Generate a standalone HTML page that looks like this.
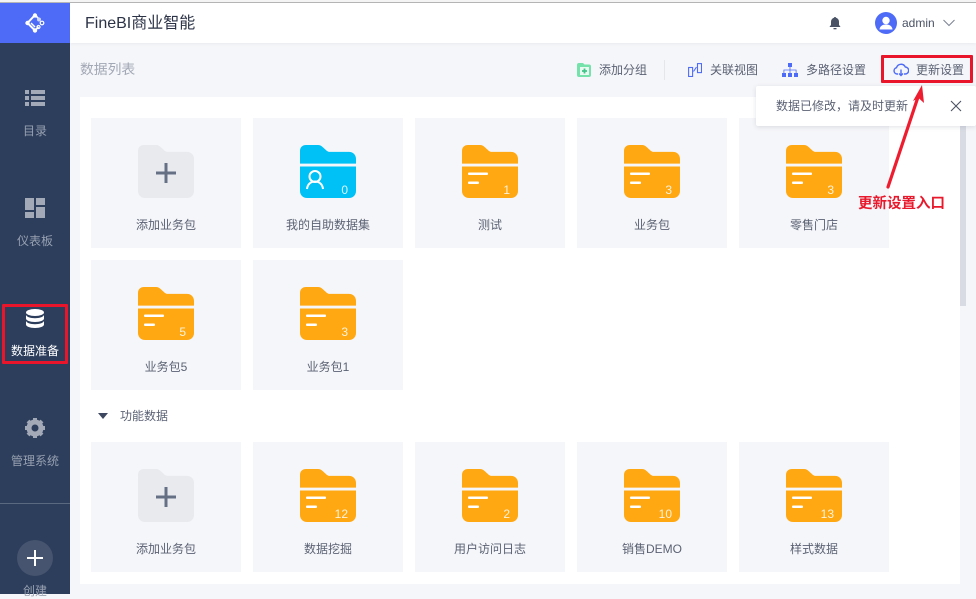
<!DOCTYPE html>
<html lang="zh"><head><meta charset="utf-8"><title>FineBI商业智能</title>
<style>
*{box-sizing:border-box}
html,body{margin:0;padding:0;width:976px;height:594px;overflow:hidden;background:#f5f6f9;font-family:"Liberation Sans","Noto Sans CJK SC",sans-serif}
.a{position:absolute;white-space:nowrap}
.t{position:absolute;white-space:nowrap;font-size:12px;line-height:16px;color:#5b6274}
.side{position:absolute;left:0;top:3px;width:70px;height:591px;background:#2c3e5c}
.logo{position:absolute;left:0;top:3px;width:70px;height:40px;background:#4e6bf7}
.nav{position:absolute;left:0;width:70px;text-align:center;font-size:12px;line-height:16px;color:#98a0b0}
.card{position:absolute;width:150px;height:130px;background:#f5f6f9}
.card svg{position:absolute;left:47px;top:27px}
.card span{position:absolute;left:0;width:150px;top:99px;text-align:center;font-size:12px;line-height:16px;color:#5b6274;white-space:nowrap}
</style></head><body>
<div class="a" style="left:0;top:0;width:976px;height:3px;background:#f4f4f4;border-bottom:1px solid #b6b6b6"></div>
<div class="a" style="left:70px;top:3px;width:906px;height:40px;background:#fff;box-shadow:0 1px 3px rgba(40,50,80,.06)"></div>
<div class="side"></div>
<div class="logo"></div>
<svg class="a" style="left:24px;top:12px" width="22" height="22" viewBox="0 0 22 22" fill="none" stroke="#fff"><path d="M11 3 3.500 11l7.500 7.500" stroke-width="2"/><path d="M11 3l3.500 3.500M11 18.500l3.500-3.500" stroke-width="1.600"/><path d="M7 11l4 4" stroke-width="1.400"/><circle cx="11" cy="3.500" r="2.200" fill="#fff" stroke="none"/><circle cx="3.500" cy="11" r="2.200" fill="#fff" stroke="none"/><circle cx="11" cy="18.500" r="2.200" fill="#fff" stroke="none"/><circle cx="15" cy="7.500" r="2" fill="#cfd8fb" stroke="none"/><circle cx="18" cy="11" r="1.800" stroke-width="1.200"/><circle cx="14.500" cy="15" r="1.500" stroke-width="1.200"/></svg>
<div class="a" style="left:85px;top:14px;font-size:16px;line-height:20px;color:#2c3347">FineBI商业智能</div>
<svg class="a" style="left:828px;top:16px" width="14" height="14" viewBox="0 0 14 14"><path d="M7 1c.6 0 1 .3 1 .8C10 2.400 11 4 11 6v3l1.300 1.500v.5H1.700v-.5L3 9V6c0-2 1-3.600 3-4.200C6 1.300 6.400 1 7 1z" fill="#4a5265"/><rect x="5.500" y="12" width="3" height="1.300" fill="#4a5265"/></svg>
<svg class="a" style="left:875px;top:12px" width="22" height="22" viewBox="0 0 22 22"><circle cx="11" cy="11" r="11" fill="#4e6bf7"/><circle cx="11" cy="8.500" r="3.700" fill="#fff"/><path d="M4.500 17.500c.4-3.400 3-5 6.500-5s6.100 1.600 6.500 5z" fill="#fff"/></svg>
<div class="t" style="left:902px;top:15px;color:#4a5265">admin</div>
<svg class="a" style="left:942px;top:19px" width="14" height="8" viewBox="0 0 14 8" fill="none"><path d="M1.500 1 7 6.500 12.500 1" stroke="#7b8294" stroke-width="1"/></svg>

<svg class="a" style="left:25px;top:90px" width="20" height="16" viewBox="0 0 20 16" fill="#a3a9b6"><rect width="4" height="4"/><rect x="6" width="14" height="4"/><rect y="6" width="4" height="4"/><rect x="6" y="6" width="14" height="4"/><rect y="12" width="4" height="4"/><rect x="6" y="12" width="14" height="4"/></svg>
<div class="nav" style="top:123px">目录</div>
<svg class="a" style="left:25px;top:198px" width="20" height="20" viewBox="0 0 20 20" fill="#a3a9b6"><rect width="9" height="12"/><rect x="11" width="9" height="7"/><rect y="14" width="9" height="6"/><rect x="11" y="9" width="9" height="11"/></svg>
<div class="nav" style="top:233px">仪表板</div>
<svg class="a" style="left:26px;top:309px" width="18" height="19" viewBox="0 0 18 19" fill="#fff"><ellipse cx="9" cy="3.500" rx="9" ry="3.500"/><path d="M0 6c1 2.200 4.500 3.200 9 3.200S17 8.200 18 6v3.500c0 2-4 3.500-9 3.500s-9-1.500-9-3.500z"/><path d="M0 12c1 2.200 4.500 3.200 9 3.200s8-1 9-3.200v3.500c0 2-4 3.500-9 3.500s-9-1.500-9-3.500z"/></svg>
<div class="nav" style="top:343px;color:#fff">数据准备</div>
<svg class="a" style="left:25px;top:418px" width="20" height="20" viewBox="0 0 20 20"><circle cx="10" cy="10" r="6" fill="none" stroke="#a3a9b6" stroke-width="5"/><g stroke="#a3a9b6" stroke-width="4"><path d="M10 0v3M10 17v3M0 10h3M17 10h3M3 3l2 2M15 15l2 2M17 3l-2 2M5 15l-2 2"/></g></svg>
<div class="nav" style="top:453px">管理系统</div>
<div class="a" style="left:0;top:503px;width:70px;height:1px;background:#5a6880"></div>
<div class="a" style="left:17px;top:540px;width:36px;height:36px;border-radius:50%;background:#46546f"></div>
<div class="a" style="left:27px;top:557px;width:16px;height:2px;background:#fff"></div>
<div class="a" style="left:34px;top:550px;width:2px;height:16px;background:#fff"></div>
<div class="nav" style="top:583px">创建</div>

<div class="a" style="left:80px;top:61px;font-size:13.800px;line-height:18px;color:#a2a8b5">数据列表</div>
<svg class="a" style="left:577px;top:63px" width="14" height="14" viewBox="0 0 14 14"><path d="M0 2a2 2 0 0 1 2-2h4l1.500 1.500H12a2 2 0 0 1 2 2V12a2 2 0 0 1-2 2H2a2 2 0 0 1-2-2z" fill="#74e2aa"/><rect x="3" y="4" width="9" height="8" fill="#eafaf2"/><path d="M7.500 5.500v5M5 8h5" stroke="#3fc587" stroke-width="1.800"/></svg>
<div class="t" style="left:599px;top:62px">添加分组</div>
<div class="a" style="left:664px;top:60px;width:1px;height:20px;background:#e4e6ec"></div>
<svg class="a" style="left:688px;top:63px" width="14" height="14" viewBox="0 0 14 14" fill="none" stroke="#4e6bf7" stroke-width="1.100"><rect x=".6" y="4.500" width="4" height="9"/><rect x="9.500" y=".6" width="4" height="9"/><path d="M5.500 8.500 8.500 4"/></svg>
<div class="t" style="left:710px;top:62px">关联视图</div>
<svg class="a" style="left:782px;top:63px" width="16" height="14" viewBox="0 0 16 14" fill="#4e6bf7"><rect x="6" y="0" width="4" height="4"/><rect x="0" y="10" width="4" height="4"/><rect x="6" y="10" width="4" height="4"/><rect x="12" y="10" width="4" height="4"/><path d="M7.600 4h.8v2.600H14.500V10h-.8V7.400H8.400V10h-.8V7.400H2.300V10h-.8V6.600h6.100z"/></svg>
<div class="t" style="left:806px;top:62px">多路径设置</div>
<svg class="a" style="left:893px;top:63px" width="16" height="14" viewBox="0 0 16 14" fill="none" stroke="#4e6bf7" stroke-width="1.400"><path d="M5 11H4a3.200 3.200 0 0 1-.5-6.300A4.700 4.700 0 0 1 12.300 4 3.500 3.500 0 0 1 12 11h-1"/><path d="M8 6.500v6M6 10.500l2 2 2-2"/></svg>
<div class="t" style="left:916px;top:62px">更新设置</div>

<div class="a" style="left:80px;top:97px;width:880px;height:487px;background:#fff"></div>
<div class="a" style="left:960px;top:120px;width:6px;height:186px;background:#d8dbe3"></div>

<svg width="0" height="0" style="position:absolute"><defs>
<path id="f" d="M6 0h12c2 0 3 .6 4.300 1.800L27 6l1.800.9H49c4 0 7 3 7 7v4.700H0V6c0-3.600 2.400-6 6-6z"/>
<path id="g" d="M0 21.500h56V46c0 4-3 7-7 7H7c-4 0-7-3-7-7z"/>
</defs></svg>

<div class="card" style="left:91px;top:118px"><svg width="56" height="53" viewBox="0 0 56 53"><path d="M6 0h12c2 0 3 .6 4.300 1.800L27 6l1.800.9H49c4 0 7 3 7 7V46c0 4-3 7-7 7H7c-4 0-7-3-7-7V6c0-3.600 2.400-6 6-6z" fill="#e8eaee"/><path d="M28 18v20M18 28h20" stroke="#667085" stroke-width="3"/></svg><span>添加业务包</span></div>
<div class="card" style="left:253px;top:118px"><svg width="56" height="53" viewBox="0 0 56 53"><g fill="#00c1f5"><use href="#f"/><use href="#g"/></g><circle cx="15" cy="31.500" r="5.500" fill="none" stroke="#fff" stroke-width="2"/><path d="M7 44c.5-5 4-7.500 8-7.500s7.500 2.500 8 7.500" fill="none" stroke="#fff" stroke-width="2"/><text x="48" y="49" text-anchor="end" font-size="12" fill="#fff" fill-opacity=".85" font-family="Liberation Sans">0</text></svg><span>我的自助数据集</span></div>
<div class="card" style="left:415px;top:118px"><svg width="56" height="53" viewBox="0 0 56 53"><g fill="#ffa812"><use href="#f"/><use href="#g"/></g><rect x="6" y="27.500" width="20" height="2.500" rx="1" fill="#fff"/><rect x="6" y="36.500" width="11" height="2.500" rx="1" fill="#fff"/><text x="48" y="49" text-anchor="end" font-size="12" fill="#fff" fill-opacity=".85" font-family="Liberation Sans">1</text></svg><span>测试</span></div>
<div class="card" style="left:577px;top:118px"><svg width="56" height="53" viewBox="0 0 56 53"><g fill="#ffa812"><use href="#f"/><use href="#g"/></g><rect x="6" y="27.500" width="20" height="2.500" rx="1" fill="#fff"/><rect x="6" y="36.500" width="11" height="2.500" rx="1" fill="#fff"/><text x="48" y="49" text-anchor="end" font-size="12" fill="#fff" fill-opacity=".85" font-family="Liberation Sans">3</text></svg><span>业务包</span></div>
<div class="card" style="left:739px;top:118px"><svg width="56" height="53" viewBox="0 0 56 53"><g fill="#ffa812"><use href="#f"/><use href="#g"/></g><rect x="6" y="27.500" width="20" height="2.500" rx="1" fill="#fff"/><rect x="6" y="36.500" width="11" height="2.500" rx="1" fill="#fff"/><text x="48" y="49" text-anchor="end" font-size="12" fill="#fff" fill-opacity=".85" font-family="Liberation Sans">3</text></svg><span>零售门店</span></div>

<div class="card" style="left:91px;top:260px"><svg width="56" height="53" viewBox="0 0 56 53"><g fill="#ffa812"><use href="#f"/><use href="#g"/></g><rect x="6" y="27.500" width="20" height="2.500" rx="1" fill="#fff"/><rect x="6" y="36.500" width="11" height="2.500" rx="1" fill="#fff"/><text x="48" y="49" text-anchor="end" font-size="12" fill="#fff" fill-opacity=".85" font-family="Liberation Sans">5</text></svg><span>业务包5</span></div>
<div class="card" style="left:253px;top:260px"><svg width="56" height="53" viewBox="0 0 56 53"><g fill="#ffa812"><use href="#f"/><use href="#g"/></g><rect x="6" y="27.500" width="20" height="2.500" rx="1" fill="#fff"/><rect x="6" y="36.500" width="11" height="2.500" rx="1" fill="#fff"/><text x="48" y="49" text-anchor="end" font-size="12" fill="#fff" fill-opacity=".85" font-family="Liberation Sans">3</text></svg><span>业务包1</span></div>

<svg class="a" style="left:98px;top:413px" width="10" height="6" viewBox="0 0 10 6"><path d="M0 0h10L5 6z" fill="#3d4760"/></svg>
<div class="t" style="left:120px;top:408px">功能数据</div>

<div class="card" style="left:91px;top:442px"><svg width="56" height="53" viewBox="0 0 56 53"><path d="M6 0h12c2 0 3 .6 4.300 1.800L27 6l1.800.9H49c4 0 7 3 7 7V46c0 4-3 7-7 7H7c-4 0-7-3-7-7V6c0-3.600 2.400-6 6-6z" fill="#e8eaee"/><path d="M28 18v20M18 28h20" stroke="#667085" stroke-width="3"/></svg><span>添加业务包</span></div>
<div class="card" style="left:253px;top:442px"><svg width="56" height="53" viewBox="0 0 56 53"><g fill="#ffa812"><use href="#f"/><use href="#g"/></g><rect x="6" y="27.500" width="20" height="2.500" rx="1" fill="#fff"/><rect x="6" y="36.500" width="11" height="2.500" rx="1" fill="#fff"/><text x="48" y="49" text-anchor="end" font-size="12" fill="#fff" fill-opacity=".85" font-family="Liberation Sans">12</text></svg><span>数据挖掘</span></div>
<div class="card" style="left:415px;top:442px"><svg width="56" height="53" viewBox="0 0 56 53"><g fill="#ffa812"><use href="#f"/><use href="#g"/></g><rect x="6" y="27.500" width="20" height="2.500" rx="1" fill="#fff"/><rect x="6" y="36.500" width="11" height="2.500" rx="1" fill="#fff"/><text x="48" y="49" text-anchor="end" font-size="12" fill="#fff" fill-opacity=".85" font-family="Liberation Sans">2</text></svg><span>用户访问日志</span></div>
<div class="card" style="left:577px;top:442px"><svg width="56" height="53" viewBox="0 0 56 53"><g fill="#ffa812"><use href="#f"/><use href="#g"/></g><rect x="6" y="27.500" width="20" height="2.500" rx="1" fill="#fff"/><rect x="6" y="36.500" width="11" height="2.500" rx="1" fill="#fff"/><text x="48" y="49" text-anchor="end" font-size="12" fill="#fff" fill-opacity=".85" font-family="Liberation Sans">10</text></svg><span>销售DEMO</span></div>
<div class="card" style="left:739px;top:442px"><svg width="56" height="53" viewBox="0 0 56 53"><g fill="#ffa812"><use href="#f"/><use href="#g"/></g><rect x="6" y="27.500" width="20" height="2.500" rx="1" fill="#fff"/><rect x="6" y="36.500" width="11" height="2.500" rx="1" fill="#fff"/><text x="48" y="49" text-anchor="end" font-size="12" fill="#fff" fill-opacity=".85" font-family="Liberation Sans">13</text></svg><span>样式数据</span></div>

<div class="a" style="left:756px;top:86px;width:220px;height:40px;background:#fff;border-radius:2px;box-shadow:0 1px 5px rgba(40,50,80,.14)"></div>
<div class="t" style="left:776px;top:98px">数据已修改，请及时更新</div>
<svg class="a" style="left:950px;top:100px" width="12" height="12" viewBox="0 0 12 12"><path d="M1 1l10 10M11 1 1 11" stroke="#4a5265" stroke-width="1.100"/></svg>

<div class="a" style="left:2px;top:304px;width:66px;height:60px;border:3px solid #e8152b;border-radius:1px"></div>
<div class="a" style="left:881px;top:55px;width:92px;height:28px;border:3px solid #e8152b;border-radius:1px"></div>
<svg class="a" style="left:880px;top:80px" width="60" height="112" viewBox="0 0 60 112"><path d="M8 107 39 14" stroke="#ee1c2e" stroke-width="3.200" stroke-linecap="round"/><path d="M42 5 33 21l5.500-3L44 23z" fill="#ee1c2e"/></svg>
<div class="a" style="left:858px;top:195px;font-size:14.500px;line-height:18px;font-weight:bold;color:#e8192c">更新设置入口</div>
</body></html>
